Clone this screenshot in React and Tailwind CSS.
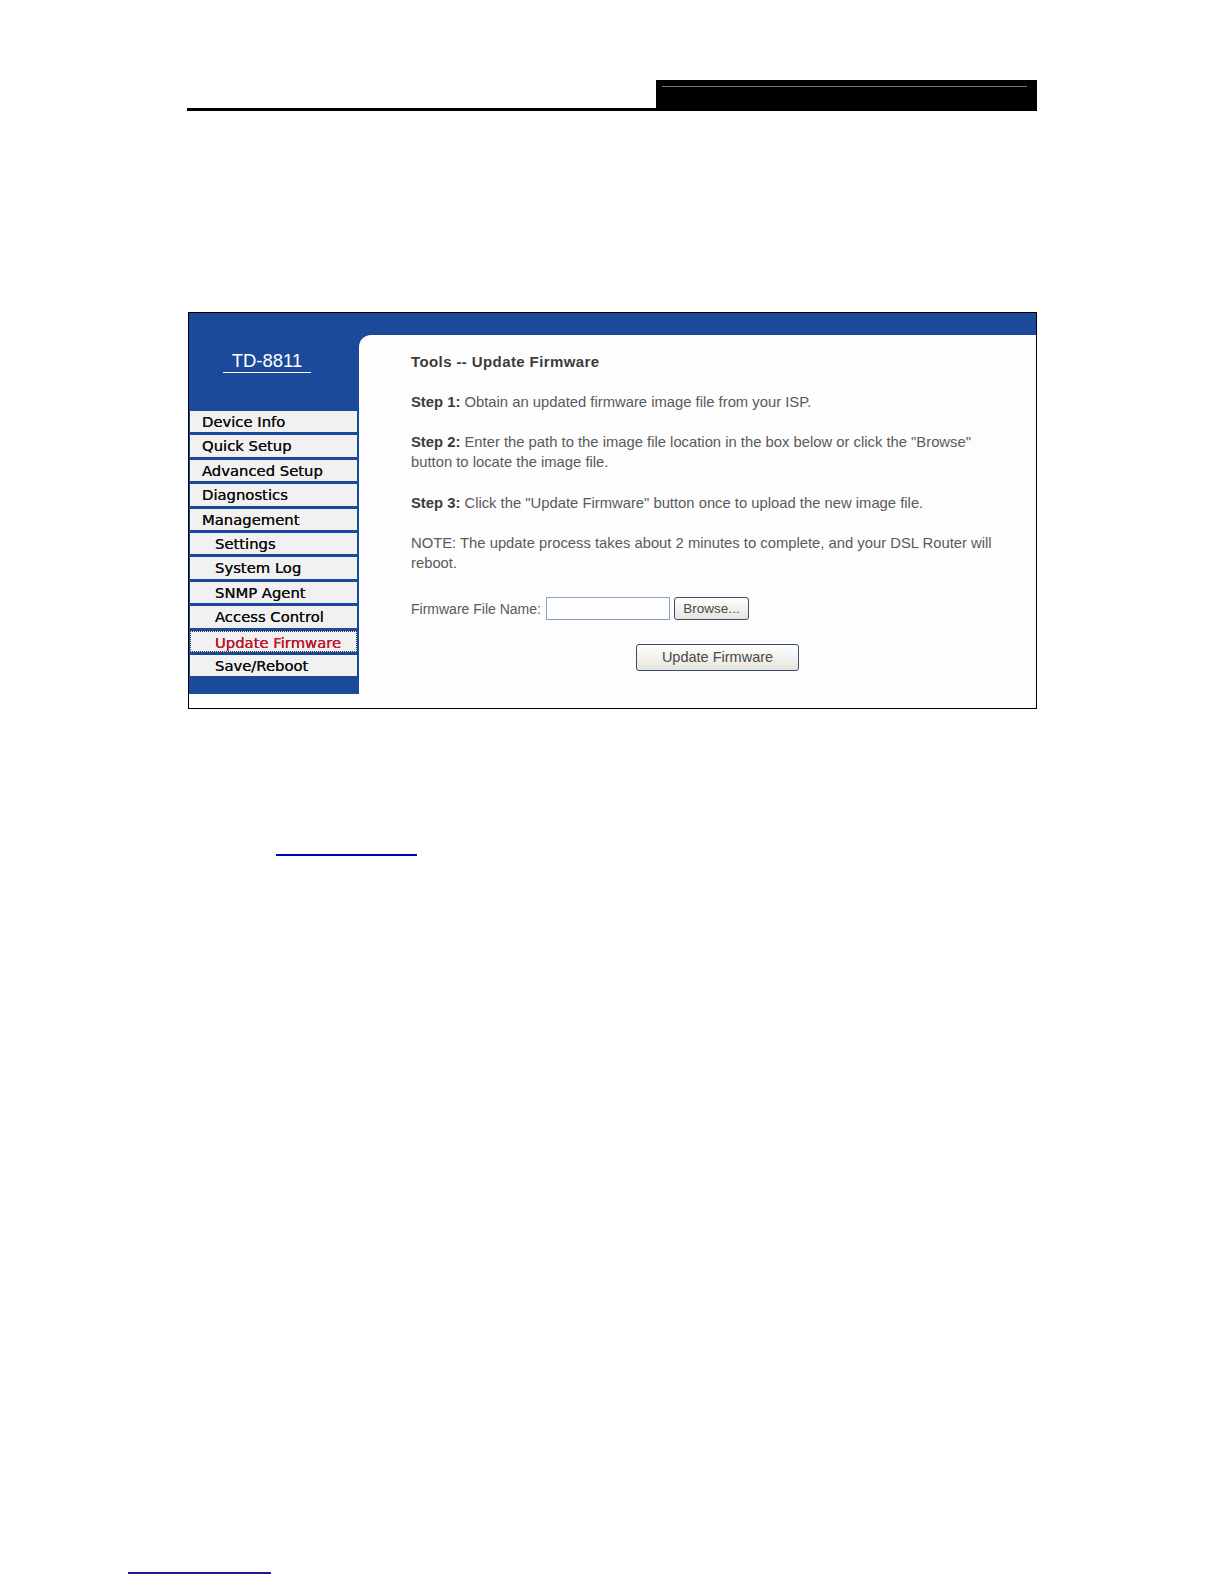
import React from "react";

const menu = [
  { label: "Device Info", sub: false },
  { label: "Quick Setup", sub: false },
  { label: "Advanced Setup", sub: false },
  { label: "Diagnostics", sub: false },
  { label: "Management", sub: false },
  { label: "Settings", sub: true },
  { label: "System Log", sub: true },
  { label: "SNMP Agent", sub: true },
  { label: "Access Control", sub: true },
  { label: "Update Firmware", sub: true, active: true },
  { label: "Save/Reboot", sub: true },
];

function MenuItem({ item }) {
  const base =
    "ml-[1px] w-[167px] h-[21.4px] bg-[#f1f1f1] text-[14.8px] leading-[21px] whitespace-nowrap [font-family:'DejaVu_Sans',Verdana,sans-serif] [text-shadow:0_0_0.25px_#000]";
  if (item.active) {
    return (
      <div className={base + " pl-[24px] text-[#e0102c] border border-dotted border-[#333] leading-[19px]"}>
        {item.label}
      </div>
    );
  }
  return (
    <div className={base + (item.sub ? " pl-[25px] text-[#111]" : " pl-[12px] text-[#111]")}>
      {item.label}
    </div>
  );
}

function Label({ children }) {
  return <span className="font-bold text-[#3c3c3c]">{children}</span>;
}

export default function App() {
  return (
    <div className="w-[1224px] h-[1584px] bg-white overflow-hidden [font-family:'Liberation_Sans',Arial,sans-serif]">
      {/* header */}
      <div className="pt-[80px] pl-[187px] flex items-end">
        <div className="w-[469px] h-[3px] bg-black" />
        <div className="w-[381px] h-[31px] bg-black pt-[6px] pl-[6px] pr-[10px]">
          <div className="h-px bg-[#7a7a7a]" />
        </div>
      </div>

      {/* screenshot frame */}
      <div className="mt-[201px] ml-[188px] w-[849px] h-[397px] border border-black flex bg-white">
        {/* sidebar */}
        <div className="w-[170px] h-[381px] bg-[#1b4a9b] flex flex-col">
          <div className="h-[98px] pt-[37px]">
            <div className="ml-[34px] w-[88px] text-center text-white text-[18.5px] leading-[21px] border-b border-white pb-[1px]">
              TD-8811
            </div>
          </div>
          <div className="flex flex-col gap-[3px]">
            {menu.map((m) => (
              <MenuItem key={m.label} item={m} />
            ))}
          </div>
        </div>

        {/* content */}
        <div className="flex-1 bg-[#1b4a9b] flex flex-col">
          <div className="h-[22px] shrink-0" />
          <div className="flex-1 bg-[#fdfdfd] rounded-tl-[12px] pl-[52px] pt-[17px] text-[14.8px] leading-[20px] text-[#5a5a5a] whitespace-nowrap">
            <div className="font-bold text-[#3c3c3c] text-[15px] tracking-[0.4px]">Tools -- Update Firmware</div>
            <div className="mt-[20px]">
              <Label>Step 1:</Label> Obtain an updated firmware image file from your ISP.
            </div>
            <div className="mt-[20px]">
              <Label>Step 2:</Label> Enter the path to the image file location in the box below or click the "Browse"
              <br />
              button to locate the image file.
            </div>
            <div className="mt-[21px]">
              <Label>Step 3:</Label> Click the "Update Firmware" button once to upload the new image file.
            </div>
            <div className="mt-[20px]">
              NOTE: The update process takes about 2 minutes to complete, and your DSL Router will
              <br />
              reboot.
            </div>
            <div className="mt-[24px] flex items-center h-[23px]">
              <span className="w-[135px] shrink-0 text-[14px]">Firmware File Name:</span>
              <div className="w-[124px] h-[23px] border border-[#8aa3c2] bg-white" />
              <div className="ml-[4px] w-[75px] h-[23px] border border-[#34506f] rounded-[3px] bg-gradient-to-b from-white to-[#e6e4dc] text-[13.5px] leading-[21px] text-center text-[#4a4a4a]">
                Browse...
              </div>
            </div>
            <div className="mt-[24px] ml-[225px] w-[163px] h-[27px] border border-[#34506f] rounded-[3px] bg-gradient-to-b from-white to-[#e6e4dc] text-[14.5px] leading-[25px] text-center text-[#4a4a4a]">
              Update Firmware
            </div>
          </div>
        </div>
      </div>

      {/* link underline */}
      <div className="mt-[145px] ml-[276px] w-[141px] h-[2px] bg-[#0000c8]" />

      {/* footer underline */}
      <div className="mt-[716px] ml-[128px] w-[143px] h-[2px] bg-[#1a1a8c]" />
    </div>
  );
}
